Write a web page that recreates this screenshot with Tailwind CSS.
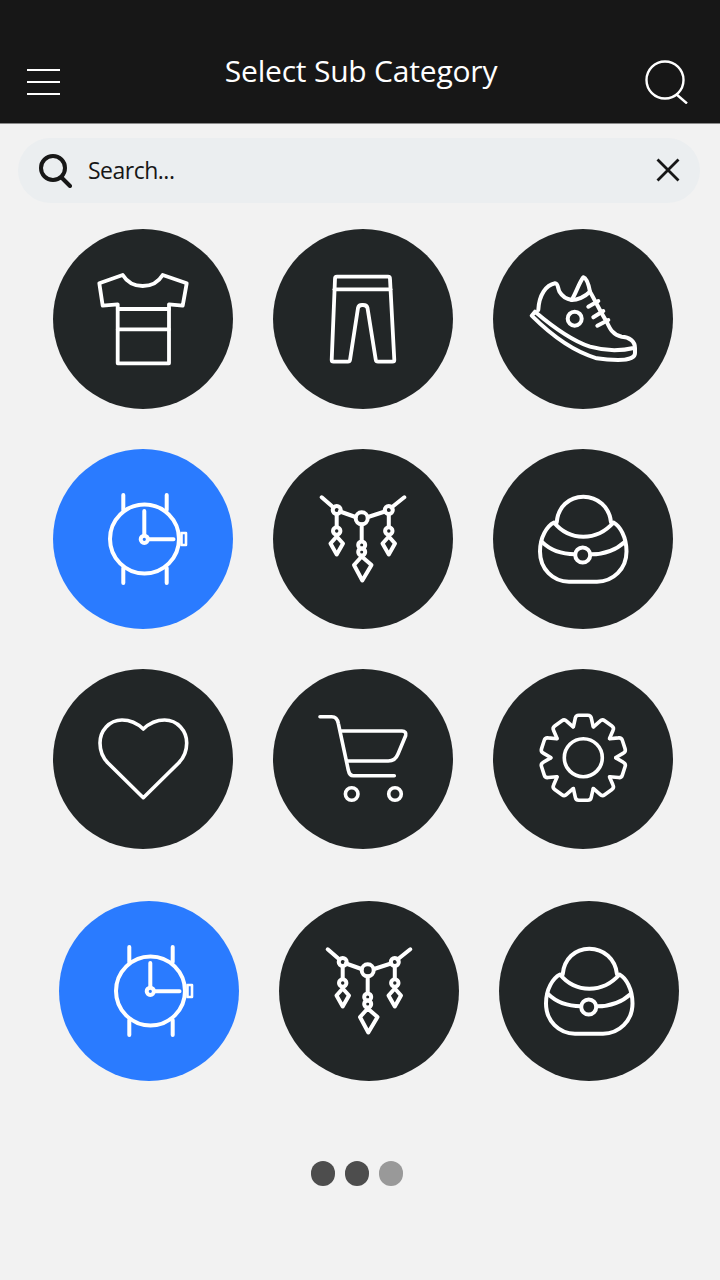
<!DOCTYPE html>
<html lang="en">
<head>
  <meta charset="UTF-8" />
  <title>Select Sub Category</title>
  <script src="https://cdn.jsdelivr.net/npm/@tailwindcss/browser@4"></script>
  <meta name="viewport" content="width=device-width, initial-scale=1.0" />
</head>
<body class="bg-[#f2f2f2] min-h-screen font-['Open_Sans',sans-serif]">

  <!-- shared icons, all drawn on the 180x180 circle -->
  <svg class="hidden">
    <symbol id="watch" viewBox="0 0 180 180">
      <circle cx="91.5" cy="90" r="34.5" />
      <path d="M70.3 46V61M113.7 46V61M70.3 119V134M113.7 119V134" />
      <path d="M91.3 62V86M95.5 90.3H120.5" />
      <circle cx="91.3" cy="90.3" r="3.6" />
      <rect x="128.5" y="84" width="4.500" height="12" stroke-width="2.600" />
    </symbol>
    <symbol id="necklace" viewBox="0 0 180 180">
      <path d="M48.7 48.3 60.5 58.5M67 62.5 82.5 68M95 68 112 62.5M118.5 58.5 131.3 48.3" />
      <circle cx="63.7" cy="61" r="4" />
      <circle cx="88.7" cy="69.3" r="6" />
      <circle cx="115.8" cy="61" r="4" />
      <path d="M63.7 65V78M115.8 65V78M88.7 75.5V92" />
      <circle cx="63.7" cy="82" r="3.7" />
      <circle cx="115.8" cy="82" r="3.7" />
      <circle cx="88.7" cy="96" r="3.5" />
      <circle cx="88.7" cy="103" r="3.5" />
      <path d="M63.7 87.5 57.5 94.5 63.7 105.5 70 94.5Z" />
      <path d="M115.8 87.5 109.5 94.5 115.8 105.5 122 94.5Z" />
      <path d="M88.7 107.5 81 116 89.3 131.5 98.5 116Z" />
    </symbol>
    <symbol id="bag" viewBox="0 0 180 180">
      <path d="M63.7 73.3C65 58 76 47.7 90.3 47.7S116.500 58 118 73.3" />
      <path d="M61 73.500C68 82 78 87.700 90.3 87.700S113 82 120.500 73.500C127 77 133.500 88 133.500 102.500C133.500 120 120 132.700 104 132.700H76C60 132.700 47 120 47 102.500C47 88 54 77 61 73.500Z" />
      <path d="M48.700 92.700C57 101 68 105.300 82 105.300M98 105.300C112 105.300 123 101 132 92.700" />
      <circle cx="89.700" cy="106" r="7.500" />
    </symbol>
  </svg>

  <header class="h-[124px] bg-[#171717] border-b border-[#8a8a8a] relative">
    <div class="h-full flex items-start justify-between pl-[27px] pr-[32px] pt-[60px]">
      <div class="w-[33px] pt-[9px] flex flex-col gap-[10px]">
        <div class="h-[2px] bg-white"></div>
        <div class="h-[2px] bg-white"></div>
        <div class="h-[2px] bg-white"></div>
      </div>
      <h1 class="absolute left-[2px] right-0 top-[51px] text-center text-white text-[30px] tracking-[-0.2px] leading-[40px]">Select Sub Category</h1>
      <svg class="w-[43px] h-[44px]" viewBox="0 0 43 44" fill="none" stroke="white" stroke-width="2.400">
        <circle cx="20" cy="20" r="18.500" />
        <path d="M31 34 42 43.500" />
      </svg>
    </div>
  </header>

  <main>
    <div class="ml-[18px] mr-[20px] mt-[14px] h-[65px] rounded-full bg-[#ebeef0] flex items-center pl-[21px] pr-[20px]">
      <svg class="w-[33px] h-[34px] mr-[16px]" viewBox="0 0 33 34" fill="none" stroke="#171717" stroke-width="4" stroke-linecap="round">
        <circle cx="14" cy="14" r="12" />
        <path d="M22.500 23.500 31 32" />
      </svg>
      <span class="flex-1 text-[#171717] text-[23px] tracking-[-0.5px] leading-none">Search...</span>
      <svg class="w-[24px] h-[24px] -mt-[1px]" viewBox="0 0 24 24" fill="none" stroke="#171717" stroke-width="2.800">
        <path d="M1.500 1.500 22.500 22.500M22.500 1.500 1.500 22.500" />
      </svg>
    </div>

    <div class="mt-[26px] pl-[53px] flex flex-col gap-[40px]">
      <div class="flex gap-[40px]">
        <div class="w-[180px] h-[180px] rounded-full bg-[#222627]">
          <svg class="w-full h-full" viewBox="0 0 180 180" fill="none" stroke="white" stroke-width="3.800" stroke-linejoin="round" stroke-linecap="round">
            <path d="M69.700 46C74 53 81 57 89.700 57S105.500 53 109.700 46L133.700 54.300 129.700 76.700 116 75.300V134.300H64.700V75.300L49.700 76.700 46.300 54.300Z" />
            <path d="M64.700 80H116M64.700 100.300H116" />
          </svg>
        </div>
        <div class="w-[180px] h-[180px] rounded-full bg-[#222627]">
          <svg class="w-full h-full" viewBox="0 0 180 180" fill="none" stroke="white" stroke-width="3.800" stroke-linejoin="round" stroke-linecap="round">
            <path d="M64 47.700H115C116.500 47.700 117 48.500 117 50L121.300 131C121.300 132 120.800 132.700 119.500 132.700H105C103.800 132.700 103 132 102.800 131L94.500 79C94 76.800 93 76 90 76H89C86.500 76 85.500 76.800 85 79L77 131C76.800 132 76 132.700 75 132.700H60.500C59.200 132.700 58.700 132 58.700 131L62 50C62 48.500 62.700 47.700 64 47.700Z" />
            <path d="M61.500 60.300H117.500" />
          </svg>
        </div>
        <div class="w-[180px] h-[180px] rounded-full bg-[#222627]">
          <svg class="w-full h-full" viewBox="0 0 180 180" fill="none" stroke="white" stroke-width="4" stroke-linejoin="round" stroke-linecap="round">
            <path d="M45.300 81C46 66 53 56 62 54.300C65 54 65 60 66.500 62.700C69 67 73 70 78.700 71C83 64 86 54 90.300 48.300C93 49 95 52 97 62.700C103 73 108 84 113.700 92.700C117 100 120 106 128.700 107.700C136 108 142 112 142 119V124C142 129 134 131 125 131C115 131 108 130 103.700 129.300C82 123 58 106 38.700 86.700L42 82.700C60 98 80 112 97 117.700C112 122 128 122 142 118.700" />
            <circle cx="81.700" cy="89.700" r="7" />
            <path d="M78.700 71C84 71 92 68 97 62.700M95.300 77.700 105.300 72M100.300 88.300 110.300 82M104.300 96.700 115.300 91" />
          </svg>
        </div>
      </div>

      <div class="flex gap-[40px]">
        <div class="w-[180px] h-[180px] rounded-full bg-[#2a7bff]">
          <svg class="w-full h-full" fill="none" stroke="white" stroke-width="4" stroke-linejoin="round" stroke-linecap="round"><use href="#watch" /></svg>
        </div>
        <div class="w-[180px] h-[180px] rounded-full bg-[#222627]">
          <svg class="w-full h-full" fill="none" stroke="white" stroke-width="4" stroke-linejoin="round" stroke-linecap="round"><use href="#necklace" /></svg>
        </div>
        <div class="w-[180px] h-[180px] rounded-full bg-[#222627]">
          <svg class="w-full h-full" fill="none" stroke="white" stroke-width="4" stroke-linejoin="round" stroke-linecap="round"><use href="#bag" /></svg>
        </div>
      </div>

      <div class="flex gap-[40px]">
        <div class="w-[180px] h-[180px] rounded-full bg-[#222627]">
          <svg class="w-full h-full" viewBox="0 0 180 180" fill="none" stroke="white" stroke-width="3.600" stroke-linejoin="round" stroke-linecap="round">
            <path d="M90.300 60C84 54 76 51 69 51C56 51 47 62 47 74C47 82 50 89 55 94L90.300 128.700 125.600 94C130.600 89 133.700 82 133.700 74C133.700 62 124.600 51 111.600 51C104.600 51 96.600 54 90.300 60Z" />
          </svg>
        </div>
        <div class="w-[180px] h-[180px] rounded-full bg-[#222627]">
          <svg class="w-full h-full" viewBox="0 0 180 180" fill="none" stroke="white" stroke-width="3.600" stroke-linejoin="round" stroke-linecap="round">
            <path d="M47 47.700H58.700C62 47.700 64.500 50 65.300 54.300L75.300 101C76 104.500 78 106.700 80.300 106.700H121.300" />
            <path d="M68.700 62H129C132 62 133.500 64 132.700 66.500L125 85C123 90 120 92 115.300 92H74.300" />
            <circle cx="78.700" cy="125" r="6.300" />
            <circle cx="122" cy="125" r="6.300" />
          </svg>
        </div>
        <div class="w-[180px] h-[180px] rounded-full bg-[#222627]">
          <svg class="w-full h-full" viewBox="0 0 180 180" fill="none" stroke="white" stroke-width="3.600" stroke-linejoin="round" stroke-linecap="round">
            <defs><path id="tooth" d="M-9.900 -31-8 -39.500Q-7.500 -42.500-4.500 -42.500H4.500Q7.500 -42.500 8 -39.500L9.900 -31" /></defs>
            <circle cx="90.300" cy="88.700" r="19" />
            <g transform="translate(90.300 88.700)">
              <use href="#tooth" />
              <use href="#tooth" transform="rotate(36)" />
              <use href="#tooth" transform="rotate(72)" />
              <use href="#tooth" transform="rotate(108)" />
              <use href="#tooth" transform="rotate(144)" />
              <use href="#tooth" transform="rotate(180)" />
              <use href="#tooth" transform="rotate(216)" />
              <use href="#tooth" transform="rotate(252)" />
              <use href="#tooth" transform="rotate(288)" />
              <use href="#tooth" transform="rotate(324)" />
            </g>
          </svg>
        </div>
      </div>
    </div>

    <div class="mt-[52px] pl-[59px] flex gap-[40px]">
      <div class="w-[180px] h-[180px] rounded-full bg-[#2a7bff]">
        <svg class="w-full h-full" fill="none" stroke="white" stroke-width="4" stroke-linejoin="round" stroke-linecap="round"><use href="#watch" /></svg>
      </div>
      <div class="w-[180px] h-[180px] rounded-full bg-[#222627]">
        <svg class="w-full h-full" fill="none" stroke="white" stroke-width="4" stroke-linejoin="round" stroke-linecap="round"><use href="#necklace" /></svg>
      </div>
      <div class="w-[180px] h-[180px] rounded-full bg-[#222627]">
        <svg class="w-full h-full" fill="none" stroke="white" stroke-width="4" stroke-linejoin="round" stroke-linecap="round"><use href="#bag" /></svg>
      </div>
    </div>

    <div class="mt-[80px] pl-[310.500px] flex gap-[9.500px]">
      <div class="w-[24.500px] h-[24.500px] rounded-full bg-[#4d4d4d]"></div>
      <div class="w-[24.500px] h-[24.500px] rounded-full bg-[#4d4d4d]"></div>
      <div class="w-[24.500px] h-[24.500px] rounded-full bg-[#999999]"></div>
    </div>
  </main>
</body>
</html>
